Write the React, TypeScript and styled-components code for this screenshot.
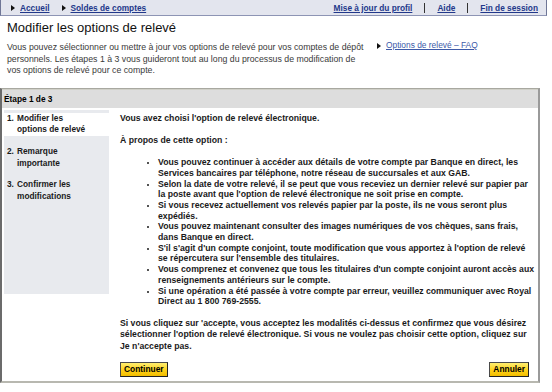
import React from 'react';
import styled, {createGlobalStyle} from 'styled-components';

const GlobalStyles = createGlobalStyle`
  html, body {
    margin: 0;
    padding: 0;
    background: #fff;
  }
  body {
    font-family: "Liberation Sans", Arial, sans-serif;
    color: #000;
  }
`

const Page = styled.div`
  width: 552px;
  height: 392px;
  overflow: hidden;
`

const TopNav = styled.nav`
  width: 547px;
  height: 16px;
  display: flex;
  justify-content: space-between;
  align-items: center;
  box-sizing: border-box;
  padding: 0 8px 0 10px;

  background-color: #e3e5ee;
  border-left: 1px solid #6f7696;
  border-right: 1px solid #6f7696;
  border-bottom: 1px solid #8d94b4;
`

const NavGroup = styled.div`
  display: flex;
  align-items: center;
  gap: 12px;
`

const Arrow = styled.span`
  display: inline-block;
  width: 0;
  height: 0;
  margin-right: 5px;
  border-top: 3px solid transparent;
  border-bottom: 3px solid transparent;
  border-left: 4px solid #111;
`

const NavLink = styled.a`
  display: inline-flex;
  align-items: center;
  font-size: 8.3px;
  font-weight: bold;
  color: #22388a;
  text-decoration: underline;
  cursor: pointer;
`

const Sep = styled.span`
  display: inline-block;
  width: 1px;
  height: 10px;
  background: #333;
`

const Intro = styled.section`
  padding: 4px 7px 0;
`

const Title = styled.h1`
  margin: 0 0 6px;
  font-size: 13px;
  font-weight: normal;
  line-height: 16px;
  color: #111;
`

const IntroRow = styled.div`
  display: flex;
  align-items: flex-start;
  gap: 8px;
`

const IntroText = styled.p`
  width: 362px;
  flex-shrink: 0;
  margin: 0;
  font-size: 8.75px;
  line-height: 11.5px;
  color: #3a3a3a;
`

const FaqLink = styled.a`
  display: inline-flex;
  align-items: center;
  margin-top: -2px;
  font-size: 8.4px;
  line-height: 11.5px;
  color: #3d5aa8;
  text-decoration: underline;
  cursor: pointer;
`

const StepBox = styled.section`
  width: 540px;
  margin-top: 11px;
  box-sizing: border-box;
  border-left: 2px solid #6b6b6b;
  border-right: 2px solid #9a9a9a;
  border-top: 1px solid #a8a8a0;
  border-bottom: 2px solid #b8b8b0;
`

const StepHeader = styled.div`
  height: 18px;
  padding-left: 2px;
  display: flex;
  align-items: center;
  font-size: 8.3px;
  font-weight: bold;
  background-color: #dddddd;
  border-top: 1px solid #d0d0c8;
`

const StepBody = styled.div`
  display: flex;
  align-items: flex-start;
  padding: 2px 0 0 2px;
`

const Sidebar = styled.ol`
  width: 105px;
  height: 184px;
  flex-shrink: 0;
  margin: 0;
  padding: 3px 0 0;
  list-style: none;
  box-sizing: border-box;
  background-color: #e8eaee;
`

const StepItem = styled.li<{ active?: boolean }>`
  display: flex;
  padding: 0 0 0 3px;
  margin-bottom: 10px;
  font-size: 8.3px;
  font-weight: bold;
  line-height: 11.7px;
  color: #1a1a1a;
  background-color: ${({active}) => active ? '#fff' : 'transparent'};
`

const StepNum = styled.span`
  width: 10px;
  flex-shrink: 0;
`

const Content = styled.div`
  flex: 1;
  padding: 3px 1px 0 11px;
  font-size: 8.7px;
  font-weight: bold;
  line-height: 11.3px;
  color: #1a1a1a;
`

const Para = styled.p<{ tight?: boolean }>`
  margin: 0 0 ${({tight}) => tight ? '8px' : '11px'};
`

const BulletList = styled.ul`
  margin: 0 0 11px;
  padding-left: 38px;
  line-height: 10.7px;
  list-style: disc;

  li::marker {
    font-size: 7px;
  }
`

const Actions = styled.div`
  display: flex;
  justify-content: space-between;
  padding: 2px 8px 4px 0;
`

const YellowButton = styled.button`
  height: 15px;
  padding: 0 3px;
  font-family: "Liberation Sans", Arial, sans-serif;
  font-size: 8.4px;
  font-weight: bold;
  color: #000;
  background: linear-gradient(#ffee70, #ffd21a 55%, #f2bd00);
  border: 1px solid #4a4a4a;
  border-right-color: #222;
  border-bottom-color: #222;
  cursor: pointer;
`

function Triangle() {
  return <Arrow/>
}

export default function App() {
  return (
    <Page>
      <GlobalStyles/>
      <TopNav>
        <NavGroup>
          <NavLink><Triangle/>Accueil</NavLink>
          <NavLink><Triangle/>Soldes de comptes</NavLink>
        </NavGroup>
        <NavGroup>
          <NavLink>Mise à jour du profil</NavLink>
          <Sep/>
          <NavLink>Aide</NavLink>
          <Sep/>
          <NavLink>Fin de session</NavLink>
        </NavGroup>
      </TopNav>

      <Intro>
        <Title>Modifier les options de relevé</Title>
        <IntroRow>
          <IntroText>
            Vous pouvez sélectionner ou mettre à jour vos options de relevé pour vos comptes de dépôt
            personnels. Les étapes 1 à 3 vous guideront tout au long du processus de modification de
            vos options de relevé pour ce compte.
          </IntroText>
          <FaqLink><Triangle/>Options de relevé – FAQ</FaqLink>
        </IntroRow>
      </Intro>

      <StepBox>
        <StepHeader>Étape 1 de 3</StepHeader>
        <StepBody>
          <Sidebar>
            <StepItem active><StepNum>1.</StepNum><span>Modifier les<br/>options de relevé</span></StepItem>
            <StepItem><StepNum>2.</StepNum><span>Remarque<br/>importante</span></StepItem>
            <StepItem><StepNum>3.</StepNum><span>Confirmer les<br/>modifications</span></StepItem>
          </Sidebar>
          <Content>
            <Para>Vous avez choisi l'option de relevé électronique.</Para>
            <Para>À propos de cette option :</Para>
            <BulletList>
              <li>Vous pouvez continuer à accéder aux détails de votre compte par Banque en direct, les Services bancaires par téléphone, notre réseau de succursales et aux GAB.</li>
              <li>Selon la date de votre relevé, il se peut que vous receviez un dernier relevé sur papier par la poste avant que l'option de relevé électronique ne soit prise en compte.</li>
              <li>Si vous recevez actuellement vos relevés papier par la poste, ils ne vous seront plus expédiés.</li>
              <li>Vous pouvez maintenant consulter des images numériques de vos chèques, sans frais, dans Banque en direct.</li>
              <li>S'il s'agit d'un compte conjoint, toute modification que vous apportez à l'option de relevé se répercutera sur l'ensemble des titulaires.</li>
              <li>Vous comprenez et convenez que tous les titulaires d'un compte conjoint auront accès aux renseignements antérieurs sur le compte.</li>
              <li>Si une opération a été passée à votre compte par erreur, veuillez communiquer avec Royal Direct au 1 800 769-2555.</li>
            </BulletList>
            <Para tight>
              Si vous cliquez sur 'accepte, vous acceptez les modalités ci-dessus et confirmez que vous désirez
              sélectionner l'option de relevé électronique. Si vous ne voulez pas choisir cette option, cliquez sur
              Je n'accepte pas.
            </Para>
            <Actions>
              <YellowButton>Continuer</YellowButton>
              <YellowButton>Annuler</YellowButton>
            </Actions>
          </Content>
        </StepBody>
      </StepBox>
    </Page>
  );
}
